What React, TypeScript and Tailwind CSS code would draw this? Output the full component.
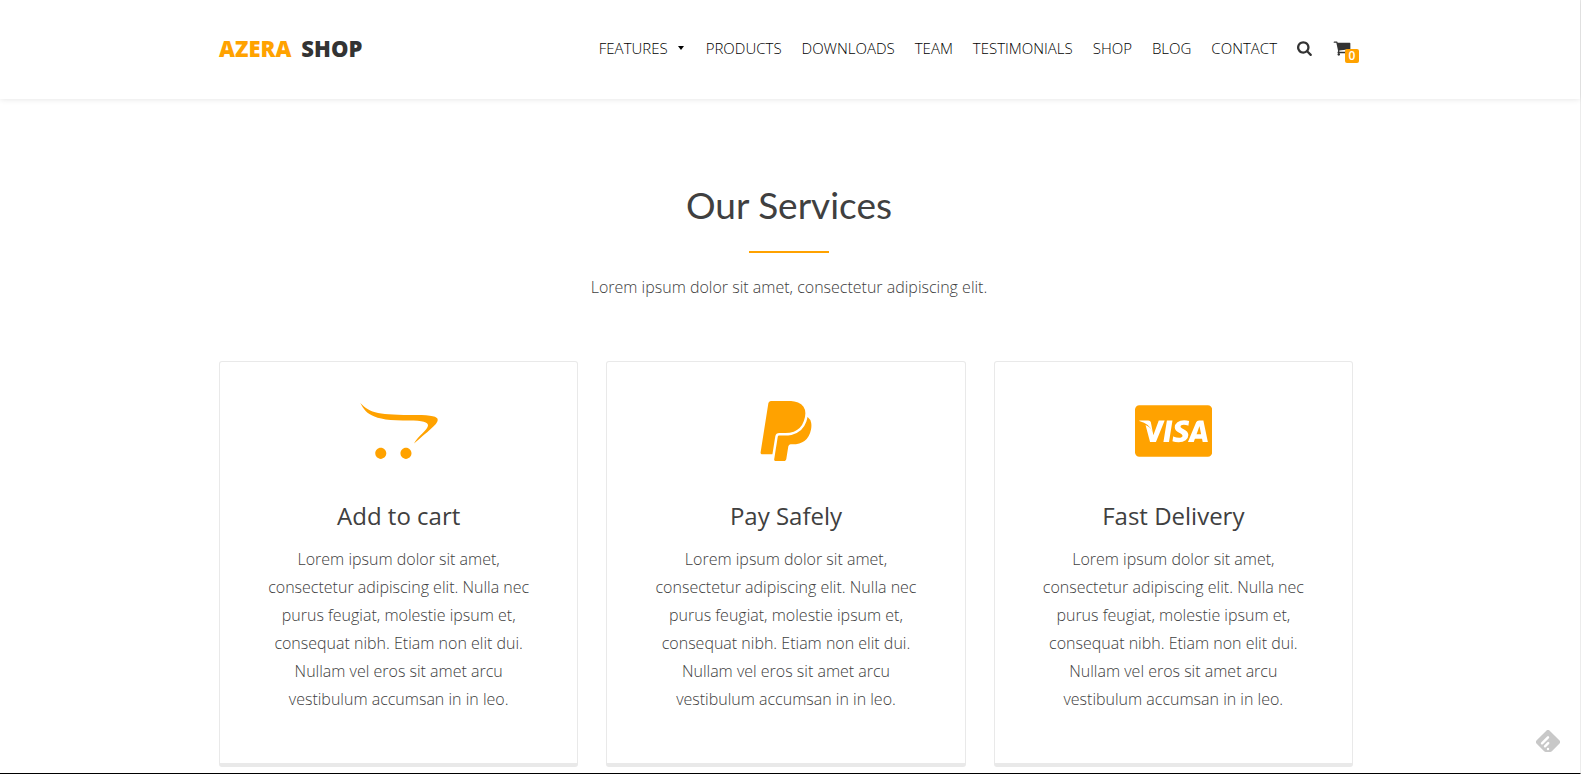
import { FaOpencart } from "react-icons/fa";

const navItems = ["Products", "Downloads", "Team", "Testimonials", "Shop", "Blog", "Contact"];

const serviceText =
  "Lorem ipsum dolor sit amet, consectetur adipiscing elit. Nulla nec purus feugiat, molestie ipsum et, consequat nibh. Etiam non elit dui. Nullam vel eros sit amet arcu vestibulum accumsan in in leo.";

function SearchIcon() {
  return (
    <svg viewBox="0 0 1792 1792" className="size-4" fill="currentColor" aria-hidden="true">
      <path d="M1152 832q0-185-131.5-316.5t-316.5-131.5-316.5 131.5-131.5 316.5 131.5 316.5 316.5 131.5 316.5-131.5 131.5-316.5zm512 832q0 52-38 90t-90 38q-54 0-90-38l-343-342q-179 124-399 124-143 0-273.5-55.5t-225-150-150-225-55.5-273.5 55.5-273.5 150-225 225-150 273.5-55.5 273.5 55.5 225 150 150 225 55.5 273.5q0 220-124 399l343 343q37 37 37 90z" />
    </svg>
  );
}

function CartIcon() {
  return (
    <svg viewBox="0 0 1792 1792" className="size-[18px]" fill="currentColor" aria-hidden="true">
      <path d="M704 1536q0 52-38 90t-90 38-90-38-38-90 38-90 90-38 90 38 38 90zm896 0q0 52-38 90t-90 38-90-38-38-90 38-90 90-38 90 38 38 90zm128-1088v512q0 24-16.5 42.5t-40.5 21.5l-1044 122q13 60 13 70 0 16-24 64h920q26 0 45 19t19 45-19 45-45 19h-1024q-26 0-45-19t-19-45q0-11 8-31.5t16-36 21.5-40 15.5-29.5l-177-823h-204q-26 0-45-19t-19-45 19-45 45-19h256q16 0 28.5 6.5t19.5 15.5 13 24.5 8 26 5.5 29.5 4.5 26h1201q26 0 45 19t19 45z" />
    </svg>
  );
}

function PaypalIcon() {
  return (
    <svg viewBox="0 0 1792 1792" className="h-[60px]" fill="currentColor" overflow="visible" aria-hidden="true">
      <path d="M1647 646q18 84-4 204-87 444-565 444h-44q-25 0-44 16.5t-24 42.5l-4 19-55 346-2 15q-5 26-24.5 42.5t-44.5 16.5h-251q-21 0-33-15t-9-36q9-56 26.5-168t26.5-168 27-167.5 27-167.5q5-37 43-37h131q133 2 236-21 175-39 287-144 102-95 155-246 24-70 35-133 1-6 2.5-7.5t3.5-1 6 3.5q79 59 98 162zm-172-282q0 107-46 236-80 233-302 315-113 40-252 42 0 1-90 1l-90-1q-100 0-118 96-2 8-85 530-1 10-12 10h-295q-22 0-36.5-16.5t-11.5-38.5l232-1471q5-29 27.5-48t51.5-19h598q34 0 97.5 13t111.5 32q107 41 163.5 123t56.5 196z" />
    </svg>
  );
}

function VisaIcon() {
  return (
    <svg viewBox="0 0 2304 1792" className="h-[60px]" fill="currentColor" aria-hidden="true">
      <path d="M1975 990h-138q14-37 66-179l3-9q4-10 10-26t9-26l12 55zm-1444-58l-58-295q-11-54-75-54h-268l-2 13q311 79 403 336zm179-349l-162 438-17-89q-26-70-85-129.5t-131-88.5l135 510h175l261-641h-176zm139 642h166l104-642h-166zm768-626q-69-27-149-27-123 0-201 59t-79 153q-1 102 145 174 48 23 67 41t19 39q0 30-30 46t-69 16q-86 0-156-33l-22-11-23 144q74 34 185 34 130 1 208.5-59t80.5-160q0-106-140-174-49-25-71-42t-22-38q0-22 24.5-38.5t70.5-16.5q70-1 124 24l15 8zm425-16h-128q-65 0-87 54l-246 588h174l35-96h212q5 22 20 96h154zm262-327v1280q0 52-38 90t-90 38h-2048q-52 0-90-38t-38-90v-1280q0-52 38-90t90-38h2048q52 0 90 38t38 90z" />
    </svg>
  );
}

const services = [
  { title: "Add to cart", icon: <FaOpencart className="h-[62px] w-[78px]" /> },
  { title: "Pay Safely", icon: <PaypalIcon /> },
  { title: "Fast Delivery", icon: <VisaIcon /> },
];

export default function App() {
  return (
    <div className="border-r border-b border-r-[#ececec] border-b-black bg-white pr-0.5 font-['Open_Sans',sans-serif] text-[#404040]">
      <header className="-mr-0.5 pr-0.5 shadow-[0_0_6px_rgba(0,0,0,0.12)]">
        <div className="mx-auto flex h-[99px] max-w-[1140px] items-center justify-between pb-[3px]">
          <a href="#home" className="flex gap-2.5 text-[22px] leading-7 font-extrabold text-[#333]">
            <span className="text-[#ffa200]">AZERA</span>
            <span>SHOP</span>
          </a>

          <nav className="flex items-center gap-5 text-[15px] leading-6 font-light text-black uppercase">
            <a href="#features" className="flex items-center gap-2.5">
              Features
              <svg viewBox="0 0 6 4" className="mr-0.5 w-1.5" fill="currentColor" aria-hidden="true">
                <path d="M0 0h6L3 4z" />
              </svg>
            </a>
            {navItems.map((item) => (
              <a key={item} href={`#${item.toLowerCase()}`}>
                {item}
              </a>
            ))}
            <button type="button" aria-label="Search" className="text-[#333]">
              <SearchIcon />
            </button>
            <a href="#cart" aria-label="Cart" className="relative pr-2 text-[#333]">
              <CartIcon />
              <span className="absolute right-0 -bottom-1.5 h-3.5 w-3.5 rounded-xs bg-[#ffa200] text-center text-xs leading-3.5 font-semibold text-white">
                0
              </span>
            </a>
          </nav>
        </div>
      </header>

      <main className="mx-auto max-w-[1140px] pt-20 pb-1.5">
        <div className="text-center">
          <h2 className="font-['Lato',sans-serif] text-[37px] leading-[52px]">Our Services</h2>
          <div className="mx-auto mt-5 h-0.5 w-20 bg-[#ffa200]" />
          <p className="mt-5 text-base leading-7 font-light">Lorem ipsum dolor sit amet, consectetur adipiscing elit.</p>
        </div>

        <div className="mt-15 grid grid-cols-3 gap-7 pr-1.5">
          {services.map(({ title, icon }) => (
            <article
              key={title}
              className="rounded-[3px] border border-b-4 border-[#e9e9e9] px-10 pt-9 pb-[50px] text-center"
            >
              <div className="flex h-[66px] items-center justify-center text-[#ffa200]">{icon}</div>
              <h3 className="mt-[34px] text-2xl leading-9">{title}</h3>
              <p className="mt-[11px] text-base leading-7 font-light">{serviceText}</p>
            </article>
          ))}
        </div>
      </main>

      {/* feed reader shortcut */}
      <button type="button" aria-label="Subscribe" className="fixed right-[21px] bottom-[22px] text-[#c8c8c8]">
        <svg viewBox="0 0 24 22" className="h-[22px] w-6" fill="currentColor">
          <path d="M10.3.7a2.4 2.4 0 0 1 3.4 0l9.6 9.6a2.4 2.4 0 0 1 0 3.4l-7.2 7.2a3 3 0 0 1-2.1 1h-4a3 3 0 0 1-2.1-1L.7 13.7a2.4 2.4 0 0 1 0-3.4z" />
          <g stroke="#fff" strokeWidth="2.4" strokeLinecap="round">
            <path d="M6 13.3 12 7.3M9 16.3l3.2-3.2M12 19v.1" />
          </g>
        </svg>
      </button>
    </div>
  );
}
